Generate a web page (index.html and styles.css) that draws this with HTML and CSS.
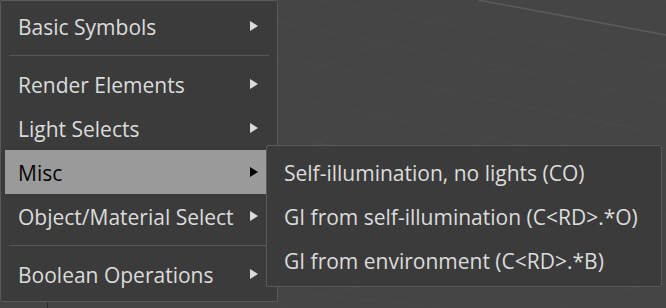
FILE: index.html
```html
<!DOCTYPE html>
<html lang="en">
<head>
    <meta charset="UTF-8">
    <title>Viewport menu</title>
    <link rel="stylesheet" href="styles.css">
</head>
<body>
    <div class="viewport">
        <svg class="grid" width="666" height="308" viewBox="0 0 666 308">
            <g stroke="#4a4a4a" stroke-width="1" fill="none">
                <line x1="270" y1="-10" x2="666" y2="67"/>
                <line x1="270" y1="20" x2="666" y2="100"/>
                <line x1="270" y1="55" x2="666" y2="135"/>
                <line x1="270" y1="93" x2="666" y2="175"/>
                <line x1="270" y1="133" x2="666" y2="215"/>
                <line x1="270" y1="290" x2="666" y2="330"/>
                <line x1="277" y1="85" x2="485" y2="0"/>
                <line x1="313" y1="145" x2="666" y2="0"/>
                <line x1="440" y1="160" x2="666" y2="65"/>
                <line x1="560" y1="145" x2="666" y2="100"/>
                <line x1="280" y1="308" x2="360" y2="286"/>
                <line x1="560" y1="308" x2="640" y2="286"/>
            </g>
            <line x1="478" y1="0" x2="666" y2="35" stroke="#5c5c5c" stroke-width="1.4"/>
            <line x1="47.5" y1="300" x2="47.5" y2="308" stroke="#2c2c2c" stroke-width="1"/>
        </svg>

        <div class="menu main-menu">
            <div class="item">Basic Symbols<span class="arrow"></span></div>
            <div class="sep"></div>
            <div class="item">Render Elements<span class="arrow"></span></div>
            <div class="item">Light Selects<span class="arrow"></span></div>
            <div class="item active">Misc<span class="arrow"></span></div>
            <div class="item">Object/Material Select<span class="arrow"></span></div>
            <div class="sep"></div>
            <div class="item">Boolean Operations<span class="arrow"></span></div>
        </div>

        <div class="menu sub-menu">
            <div class="item">Self-illumination, no lights (CO)</div>
            <div class="item">GI from self-illumination (C&lt;RD&gt;.*O)</div>
            <div class="item">GI from environment (C&lt;RD&gt;.*B)</div>
        </div>
    </div>
</body>
</html>
```

FILE: styles.css
```css
*{
    margin: 0;
    padding: 0;
    box-sizing: border-box;
}
body{
    background: #454545;
    font-family: "Open Sans", "Noto Sans", sans-serif;
}
.viewport{
    width: 666px;
    height: 308px;
    position: relative;
    overflow: hidden;
    background: #454545;
}
.grid{
    position: absolute;
    left: 0;
    top: 0;
}
.menu{
    position: absolute;
    display: flex;
    flex-direction: column;
    background: #3b3b3b;
    border: 1px solid #595959;
    border-radius: 2px;
}
.main-menu{
    left: 0;
    top: 0;
    width: 278px;
    height: 302px;
    padding: 3px 4px 4px;
}
.sub-menu{
    left: 266px;
    top: 145px;
    width: 396px;
    height: 142px;
    padding: 4px 4px 3px;
}
.item{
    height: 44px;
    flex: none;
    display: flex;
    align-items: center;
    justify-content: space-between;
    padding: 2px 15px 0 13px;
    color: #dcdcdc;
    font-size: 21px;
    white-space: nowrap;
}
.item.active{
    background: #9a9a9a;
    color: #050505;
}
.arrow{
    width: 0;
    height: 0;
    margin-bottom: 2px;
    border-top: 5.5px solid transparent;
    border-bottom: 5.5px solid transparent;
    border-left: 8px solid #dcdcdc;
}
.item.active .arrow{
    border-left-color: #050505;
}
.sep{
    height: 1px;
    flex: none;
    margin: 7px 4px 6px;
    background: #575757;
}
```
